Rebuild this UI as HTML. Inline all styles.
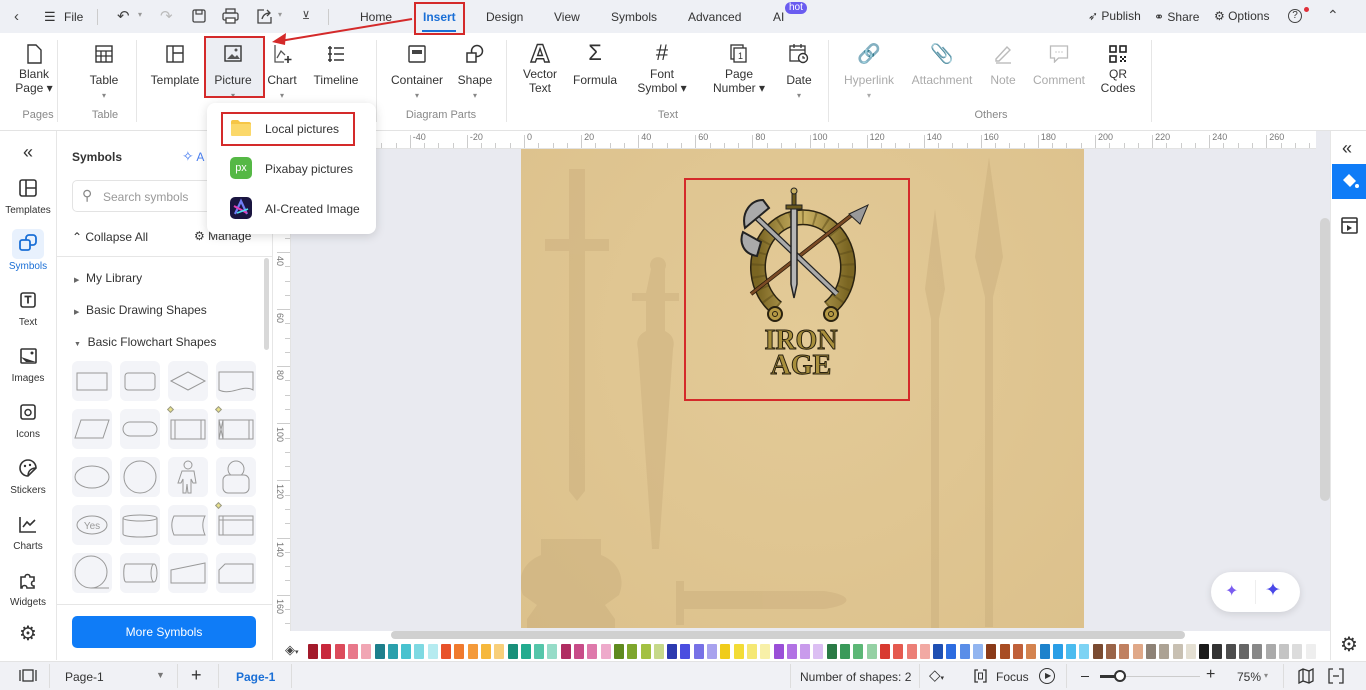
<!DOCTYPE html>
<html><head><meta charset="utf-8">
<style>
*{box-sizing:border-box;margin:0;padding:0}
body{width:1366px;height:690px;overflow:hidden;position:relative;font-family:"Liberation Sans",sans-serif;font-size:12px;color:#333;background:#fff}
.a{position:absolute}
.t{position:absolute;white-space:nowrap}
.lbl{position:absolute;text-align:center;font-size:12px;color:#333;line-height:14px;transform:translateX(-50%)}
.dis{color:#aaa}
.grp{position:absolute;top:109px;font-size:11px;color:#888;transform:translateX(-50%)}
.sep{position:absolute;top:40px;width:1px;height:82px;background:#e6e6e6}
.ic{position:absolute;transform:translateX(-50%)}
.rail{position:absolute;left:0;width:56px;text-align:center;font-size:10px;color:#333}
.tile{position:absolute;width:40px;height:40px;background:#f3f4f8;border-radius:6px}
</style></head><body>
<!-- top bar -->
<div class="a" style="left:0;top:0;width:1366px;height:33px;background:#eef0f5"></div>
<div class="t" style="left:14px;top:8px;font-size:15px;color:#444">&#8249;</div>
<div class="t" style="left:44px;top:9px;font-size:13px">&#9776;</div>
<div class="t" style="left:64px;top:10px;font-size:12px">File</div>
<div class="a" style="left:97px;top:9px;width:1px;height:16px;background:#ccc"></div>
<div class="t" style="left:117px;top:7px;font-size:15px;color:#444">&#8630;</div>
<div class="t" style="left:138px;top:10px;font-size:8px;color:#999">&#9662;</div>
<div class="t" style="left:160px;top:7px;font-size:15px;color:#bbb">&#8631;</div>
<svg class="a" style="left:192px;top:9px" width="14" height="14"><rect x="1" y="1" width="12" height="12" rx="1.5" fill="none" stroke="#444" stroke-width="1.3"/><rect x="4" y="1" width="6" height="4" fill="none" stroke="#444" stroke-width="1.2"/></svg>
<svg class="a" style="left:222px;top:8px" width="17" height="16"><rect x="4" y="1" width="9" height="4" fill="none" stroke="#444" stroke-width="1.3"/><rect x="1" y="5" width="15" height="7" rx="1.5" fill="none" stroke="#444" stroke-width="1.3"/><rect x="4" y="10" width="9" height="5" fill="#fff" stroke="#444" stroke-width="1.3"/></svg>
<svg class="a" style="left:256px;top:8px" width="16" height="16"><path d="M8 2H2v13h13V9" fill="none" stroke="#444" stroke-width="1.3"/><path d="M6 11c1-4 4-6 8-6M11 2l3 3-3 3" fill="none" stroke="#444" stroke-width="1.3"/></svg>
<div class="t" style="left:278px;top:10px;font-size:8px;color:#999">&#9662;</div>
<div class="t" style="left:302px;top:9px;font-size:11px;color:#444">&#8891;</div>
<div class="a" style="left:328px;top:9px;width:1px;height:16px;background:#ccc"></div>
<div class="t" style="left:360px;top:10px;font-size:12px">Home</div>
<div class="t" style="left:423px;top:10px;font-size:12px;color:#1a6fd6;font-weight:bold">Insert</div>
<div class="a" style="left:422px;top:30px;width:34px;height:2px;background:#1a6fd6"></div>
<div class="t" style="left:486px;top:10px;font-size:12px">Design</div>
<div class="t" style="left:554px;top:10px;font-size:12px">View</div>
<div class="t" style="left:611px;top:10px;font-size:12px">Symbols</div>
<div class="t" style="left:688px;top:10px;font-size:12px">Advanced</div>
<div class="t" style="left:773px;top:10px;font-size:12px">AI</div>
<div class="t" style="left:785px;top:2px;font-size:10px;color:#fff;background:#6a5cf0;border-radius:7px;padding:0 4px;line-height:12px">hot</div>
<div class="t" style="left:1088px;top:9px;font-size:12px">&#10166; Publish</div>
<div class="t" style="left:1154px;top:10px;font-size:12px">&#9901; Share</div>
<div class="t" style="left:1214px;top:9px;font-size:12px">&#9881; Options</div>
<div class="a" style="left:1288px;top:9px;width:14px;height:14px;border:1.3px solid #444;border-radius:50%;font-size:10px;text-align:center;line-height:12px">?</div>
<div class="a" style="left:1304px;top:7px;width:5px;height:5px;border-radius:50%;background:#e0303a"></div>
<div class="t" style="left:1327px;top:7px;font-size:14px;color:#444">&#8963;</div>

<!-- ribbon -->
<div class="a" style="left:0;top:130px;width:1366px;height:1px;background:#e3e3e3"></div>
<div class="a" style="left:206px;top:37px;width:57px;height:59px;background:#eceef3"></div>
<svg class="ic" style="left:34px;top:44px" width="16" height="20"><path d="M2 1h8l5 5v13H2z" fill="none" stroke="#333" stroke-width="1.4"/></svg>
<div class="lbl" style="left:34px;top:67px">Blank<br>Page &#9662;</div>
<svg class="ic" style="left:104px;top:45px" width="18" height="18"><rect x="1" y="1" width="16" height="16" fill="none" stroke="#333" stroke-width="1.4"/><path d="M1 6h16M1 11h16M6 6v11M11 6v11" stroke="#333" stroke-width="1.3"/></svg>
<div class="lbl" style="left:104px;top:73px">Table<br><span style="font-size:8px;color:#888">&#9662;</span></div>
<svg class="ic" style="left:175px;top:45px" width="18" height="18"><rect x="1" y="1" width="16" height="16" fill="none" stroke="#333" stroke-width="1.4"/><path d="M7 1v16M7 8h10" stroke="#333" stroke-width="1.4"/></svg>
<div class="lbl" style="left:175px;top:73px">Template</div>
<svg class="ic" style="left:233px;top:45px" width="18" height="17"><rect x="1" y="1" width="16" height="15" fill="none" stroke="#333" stroke-width="1.4"/><path d="M3 14l5-5 3 3 2-2 3 4z" fill="#555"/><circle cx="12" cy="5" r="1.5" fill="#555"/></svg>
<div class="lbl" style="left:233px;top:73px">Picture<br><span style="font-size:8px;color:#888">&#9662;</span></div>
<svg class="ic" style="left:283px;top:44px" width="20" height="20"><path d="M2 1v17h9" fill="none" stroke="#555" stroke-width="1.3"/><path d="M4 14l4-7 4 4" fill="none" stroke="#555" stroke-width="1.3"/><path d="M15 12v7M11.5 15.5h7" stroke="#333" stroke-width="1.6"/></svg>
<div class="lbl" style="left:282px;top:73px">Chart<br><span style="font-size:8px;color:#888">&#9662;</span></div>
<svg class="ic" style="left:336px;top:45px" width="18" height="18"><path d="M3 1v16M7 3h10M7 9h10M7 15h10M5 3H1M5 9H1M5 15H1" stroke="#333" stroke-width="1.5"/></svg>
<div class="lbl" style="left:336px;top:73px">Timeline</div>
<svg class="ic" style="left:417px;top:45px" width="18" height="18"><rect x="1" y="1" width="16" height="16" rx="1" fill="none" stroke="#333" stroke-width="1.4"/><rect x="4" y="5" width="10" height="4" fill="#444"/></svg>
<div class="lbl" style="left:417px;top:73px">Container<br><span style="font-size:8px;color:#888">&#9662;</span></div>
<svg class="ic" style="left:475px;top:44px" width="20" height="20"><circle cx="12" cy="7" r="5.5" fill="none" stroke="#333" stroke-width="1.5"/><rect x="2" y="9" width="9" height="9" fill="#fff" stroke="#333" stroke-width="1.5"/></svg>
<div class="lbl" style="left:475px;top:73px">Shape<br><span style="font-size:8px;color:#888">&#9662;</span></div>
<div class="ic" style="left:540px;top:40px;font-size:24px;font-family:'DejaVu Sans';color:#fff;-webkit-text-stroke:1.4px #333;font-weight:bold">A</div>
<div class="lbl" style="left:540px;top:67px">Vector<br>Text</div>
<div class="ic" style="left:595px;top:40px;font-size:22px;color:#333">&#931;</div>
<div class="lbl" style="left:595px;top:73px">Formula</div>
<div class="ic" style="left:662px;top:40px;font-size:22px;color:#333">#</div>
<div class="lbl" style="left:662px;top:67px">Font<br>Symbol &#9662;</div>
<svg class="ic" style="left:739px;top:44px" width="18" height="19"><rect x="1" y="1" width="12" height="14" fill="none" stroke="#333" stroke-width="1.3"/><rect x="4" y="4" width="12" height="14" fill="#fff" stroke="#333" stroke-width="1.3"/><text x="8" y="15" font-size="9" font-family="Liberation Sans" fill="#333">1</text></svg>
<div class="lbl" style="left:739px;top:67px">Page<br>Number &#9662;</div>
<svg class="ic" style="left:799px;top:43px" width="20" height="21"><rect x="1" y="3" width="15" height="15" fill="none" stroke="#333" stroke-width="1.3"/><path d="M1 7h15M5 1v4M12 1v4" stroke="#333" stroke-width="1.3"/><circle cx="14" cy="15" r="4.5" fill="#fff" stroke="#333" stroke-width="1.4"/><path d="M14 13v2h2" stroke="#333" stroke-width="1.2" fill="none"/></svg>
<div class="lbl" style="left:799px;top:73px">Date<br><span style="font-size:8px;color:#888">&#9662;</span></div>
<div class="ic" style="left:869px;top:42px;font-size:19px;color:#bbb">&#128279;</div>
<div class="lbl dis" style="left:869px;top:73px">Hyperlink<br><span style="font-size:8px">&#9662;</span></div>
<div class="ic" style="left:942px;top:42px;font-size:19px;color:#bbb">&#128206;</div>
<div class="lbl dis" style="left:942px;top:73px">Attachment</div>
<svg class="ic" style="left:1003px;top:44px" width="20" height="20"><path d="M3 15L14 3l3 3L6 17H3z" fill="none" stroke="#bbb" stroke-width="1.4"/><path d="M3 19h15" stroke="#bbb" stroke-width="1.4"/></svg>
<div class="lbl dis" style="left:1003px;top:73px">Note</div>
<svg class="ic" style="left:1059px;top:45px" width="19" height="18"><path d="M1 1h17v12H9l-4 4v-4H1z" fill="none" stroke="#bbb" stroke-width="1.3"/><path d="M6 7h1M9 7h1M12 7h1" stroke="#bbb" stroke-width="1.5"/></svg>
<div class="lbl dis" style="left:1059px;top:73px">Comment</div>
<svg class="ic" style="left:1118px;top:45px" width="18" height="18"><rect x="1" y="1" width="6" height="6" fill="none" stroke="#222" stroke-width="1.6"/><rect x="11" y="1" width="6" height="6" fill="none" stroke="#222" stroke-width="1.6"/><rect x="1" y="11" width="6" height="6" fill="none" stroke="#222" stroke-width="1.6"/><path d="M11 11h2v2h-2zM15 11h2v2h-2zM13 13h2v2h-2zM11 15h2v2h-2zM15 15h2v2h-2z" fill="#222"/></svg>
<div class="lbl" style="left:1118px;top:67px">QR<br>Codes</div>
<div class="grp" style="left:38px">Pages</div>
<div class="grp" style="left:105px">Table</div>
<div class="grp" style="left:441px">Diagram Parts</div>
<div class="grp" style="left:668px">Text</div>
<div class="grp" style="left:991px">Others</div>
<div class="sep" style="left:57px"></div><div class="sep" style="left:136px"></div><div class="sep" style="left:376px"></div><div class="sep" style="left:506px"></div><div class="sep" style="left:828px"></div><div class="sep" style="left:1151px"></div>

<!-- left rail -->
<div class="a" style="left:56px;top:131px;width:1px;height:529px;background:#e6e6e6"></div>
<div class="rail" style="top:142px;font-size:18px;color:#333">&#171;</div>
<svg class="a" style="left:19px;top:179px" width="18" height="18"><rect x="1" y="1" width="16" height="16" rx="2" fill="none" stroke="#333" stroke-width="1.6"/><path d="M7 1v16M7 9h10" stroke="#333" stroke-width="1.6"/></svg>
<div class="rail" style="top:205px">Templates</div>
<div class="a" style="left:12px;top:229px;width:32px;height:30px;background:#e8f1fd;border-radius:5px"></div>
<svg class="a" style="left:19px;top:234px" width="18" height="18"><rect x="7" y="1" width="10" height="10" rx="3" fill="none" stroke="#1a6fd6" stroke-width="1.8"/><rect x="1" y="6" width="10" height="10" rx="2" fill="#e8f1fd" stroke="#1a6fd6" stroke-width="1.8"/></svg>
<div class="rail" style="top:261px;color:#1a6fd6">Symbols</div>
<svg class="a" style="left:20px;top:292px" width="16" height="16"><rect x="1" y="1" width="14" height="14" rx="2" fill="none" stroke="#333" stroke-width="1.6"/><path d="M4.5 4.5h7M8 4.5v7" stroke="#333" stroke-width="1.8"/></svg>
<div class="rail" style="top:317px">Text</div>
<svg class="a" style="left:20px;top:348px" width="17" height="16"><rect x="1" y="1" width="15" height="14" rx="1" fill="none" stroke="#333" stroke-width="1.6"/><path d="M1 9l5 5h10z" fill="#333"/><circle cx="12" cy="5" r="1.5" fill="#333"/></svg>
<div class="rail" style="top:373px">Images</div>
<svg class="a" style="left:20px;top:404px" width="16" height="16"><rect x="1" y="1" width="14" height="14" rx="2" fill="none" stroke="#333" stroke-width="1.6"/><circle cx="8" cy="8.5" r="3" fill="none" stroke="#333" stroke-width="1.5"/></svg>
<div class="rail" style="top:429px">Icons</div>
<svg class="a" style="left:19px;top:459px" width="18" height="18"><path d="M17 9a8 8 0 1 0-8 8l8-8z" fill="none" stroke="#333" stroke-width="1.6"/><circle cx="6" cy="7" r="1.2" fill="#333"/><circle cx="11" cy="6" r="1.2" fill="#333"/><path d="M9 17c0-5 3-8 8-8" fill="none" stroke="#333" stroke-width="1.5"/></svg>
<div class="rail" style="top:485px">Stickers</div>
<svg class="a" style="left:19px;top:516px" width="18" height="17"><path d="M1 1v15h16" fill="none" stroke="#333" stroke-width="1.6"/><path d="M4 11l4-5 3 3 5-5" fill="none" stroke="#333" stroke-width="1.6"/></svg>
<div class="rail" style="top:541px">Charts</div>
<svg class="a" style="left:19px;top:571px" width="18" height="18"><path d="M2 6h4a2.5 2.5 0 1 1 5 0h4v4a2.5 2.5 0 1 0 0 5v2H8a2.5 2.5 0 1 0-5 0H2z" fill="none" stroke="#333" stroke-width="1.6"/></svg>
<div class="rail" style="top:597px">Widgets</div>
<div class="rail" style="top:621px;font-size:20px;color:#333">&#9881;</div>

<!-- symbols panel -->
<div class="a" style="left:272px;top:131px;width:1px;height:529px;background:#e6e6e6"></div>
<div class="t" style="left:72px;top:150px;font-size:12px;font-weight:bold">Symbols</div>
<div class="t" style="left:182px;top:148px;font-size:14px;color:#4a7ff0">&#10023;<span style="font-size:12px"> A</span></div>
<div class="a" style="left:72px;top:180px;width:210px;height:32px;border:1px solid #e3e3e3;border-radius:5px"></div>
<div class="t" style="left:82px;top:187px;font-size:14px;color:#888">&#9906;</div>
<div class="t" style="left:103px;top:190px;font-size:12px;color:#999">Search symbols</div>
<div class="t" style="left:72px;top:230px;font-size:12px">&#8963; Collapse All</div>
<div class="t" style="left:194px;top:229px;font-size:12px">&#9881; Manage</div>
<div class="a" style="left:56px;top:256px;width:216px;height:1px;background:#e6e6e6"></div>
<div class="t" style="left:74px;top:271px;font-size:12px"><span style="font-size:7px;color:#666">&#9654;</span>&nbsp; My Library</div>
<div class="t" style="left:74px;top:303px;font-size:12px"><span style="font-size:7px;color:#666">&#9654;</span>&nbsp; Basic Drawing Shapes</div>
<div class="t" style="left:74px;top:335px;font-size:12px"><span style="font-size:7px;color:#666">&#9660;</span>&nbsp; Basic Flowchart Shapes</div>
<div class="a" style="left:264px;top:258px;width:5px;height:92px;background:#d8d8d8;border-radius:3px"></div>
<div id="tiles"></div>
<div class="a" style="left:56px;top:604px;width:216px;height:1px;background:#e6e6e6"></div>
<div class="a" style="left:72px;top:616px;width:184px;height:32px;background:#0f7cf7;border-radius:5px;color:#fff;text-align:center;line-height:32px;font-size:12px">More Symbols</div>

<!-- canvas -->
<div class="a" style="left:273px;top:131px;width:1057px;height:500px;background:#e9eaf0"></div>
<div id="hr" class="a" style="left:273px;top:131px;width:1043px;height:18px;background:#fff;overflow:hidden;border-bottom:1px solid #e3e3e3"></div>
<div id="vr" class="a" style="left:273px;top:131px;width:18px;height:500px;background:#fff;overflow:hidden;border-right:1px solid #e3e3e3"></div>
<div class="a" style="left:1320px;top:218px;width:10px;height:283px;background:#d3d3d3;border-radius:5px"></div>
<div class="a" style="left:1330px;top:131px;width:1px;height:529px;background:#e6e6e6"></div>
<div class="a" style="left:521px;top:149px;width:563px;height:479px;background:radial-gradient(ellipse at 50% 40%,#e3ca97,#dcc18c)"></div>
<svg class="a" style="left:521px;top:149px" width="563" height="479">
<g fill="#c9ad7c" opacity=".45">
<path d="M48 20h16v70h24v12h-24v240l-8 10-8-10V102H24V90h24z"/>
<path d="M130 120a8 8 0 1 1 14 0v24h14v8h-14v30c8 4 10 10 8 18l-14 200-7 0-14-200c-2-8 0-14 8-18v-30h-14v-8h14z"/>
<path d="M414 60l10 80-6 30v310h-8V170l-6-30z"/>
<path d="M468 8l14 100-10 40v330h-8V148l-10-40z"/>
<path d="M20 390h60v16c20 8 24 26 18 40l-14 10 10 14v10H6v-10l10-14-14-10c-6-14-2-32 18-40z"/>
<path d="M155 432h8v10h140c30 4 30 14 0 18H163v16h-8z"/>
</g></svg>
<div class="a" style="left:684px;top:178px;width:226px;height:223px;border:2px solid #d42a2a"></div>
<svg class="a" style="left:733px;top:186px" width="140" height="192">
<defs><linearGradient id="g" x1="0" x2="1"><stop offset="0" stop-color="#7a6522"/><stop offset=".5" stop-color="#cdb466"/><stop offset="1" stop-color="#7a6522"/></linearGradient></defs>
<path d="M44 122A45 50 0 1 1 96 122" fill="none" stroke="#2a2210" stroke-width="16"/>
<path d="M44 122A45 50 0 1 1 96 122" fill="none" stroke="url(#g)" stroke-width="13"/>
<path d="M44 122A45 50 0 1 1 96 122" fill="none" stroke="#5a4a18" stroke-width="13" stroke-dasharray="2 10" opacity=".5"/>
<circle cx="42" cy="128" r="7" fill="#b69a45" stroke="#2a2210" stroke-width="2"/><circle cx="42" cy="128" r="2.5" fill="none" stroke="#2a2210"/>
<circle cx="98" cy="128" r="7" fill="#b69a45" stroke="#2a2210" stroke-width="2"/><circle cx="98" cy="128" r="2.5" fill="none" stroke="#2a2210"/>
<line x1="18" y1="108" x2="120" y2="28" stroke="#2a1a0a" stroke-width="4"/><line x1="18" y1="108" x2="120" y2="28" stroke="#7a4a25" stroke-width="2.5"/>
<path d="M116 28l19-9-8 19z" fill="#999" stroke="#222"/>
<line x1="22" y1="30" x2="104" y2="108" stroke="#222" stroke-width="6"/><line x1="22" y1="30" x2="104" y2="108" stroke="#aaa" stroke-width="3.5"/>
<path d="M30 14c-12 0-22 12-18 28l24-20zM10 46c-4 10 0 22 14 24l4-14z" fill="#aaa" stroke="#222" stroke-width="2"/>
<path d="M58 22l6 0 0 76-3 14-3-14z" fill="#b5b5b5" stroke="#222" stroke-width="1.5"/>
<rect x="53" y="19" width="16" height="4" fill="#6c5a1c" stroke="#222"/><rect x="59" y="6" width="4" height="13" fill="#6c5a1c" stroke="#222"/><circle cx="61" cy="5" r="3" fill="#c8b061" stroke="#222"/>
<text x="68" y="163" text-anchor="middle" font-family="Liberation Serif" font-weight="bold" font-size="28" fill="#a88f3c" stroke="#2a2210" stroke-width="1">IRON</text>
<text x="68" y="188" text-anchor="middle" font-family="Liberation Serif" font-weight="bold" font-size="28" fill="#a88f3c" stroke="#2a2210" stroke-width="1">AGE</text>
</svg>
<!-- floating AI buttons -->
<div class="a" style="left:1211px;top:572px;width:89px;height:40px;background:#fff;border-radius:20px;box-shadow:0 2px 8px rgba(0,0,0,.12)"></div>
<div class="t" style="left:1225px;top:581px;font-size:16px;color:#7a5cf0">&#10022;</div>
<div class="a" style="left:1255px;top:580px;width:1px;height:24px;background:#eee"></div>
<div class="t" style="left:1265px;top:579px;font-size:19px;color:#4a48e8">&#10022;</div>
<!-- right panel -->
<div class="t" style="left:1342px;top:138px;font-size:18px;color:#333">&#171;</div>
<div class="a" style="left:1332px;top:164px;width:34px;height:35px;background:#0f7cf7"></div>
<svg class="a" style="left:1340px;top:172px" width="20" height="18"><path d="M3 8l6-6 7 7-6 6z" fill="#fff"/><circle cx="17" cy="14" r="2" fill="#fff"/></svg>
<svg class="a" style="left:1341px;top:217px" width="17" height="17"><rect x="1" y="1" width="15" height="15" rx="1" fill="none" stroke="#333" stroke-width="1.6"/><path d="M1 5h15" stroke="#333" stroke-width="1.6"/><path d="M6 8l5 3-5 3z" fill="#333"/></svg>
<div class="a" style="left:391px;top:631px;width:794px;height:8px;background:#d0d0d0;border-radius:4px"></div>
<div class="t" style="left:1340px;top:632px;font-size:20px;color:#333">&#9881;</div>

<!-- palette -->
<div class="t" style="left:285px;top:642px;font-size:13px;color:#444">&#9672;<span style="font-size:7px">&#9662;</span></div>
<div id="pal"></div>
<!-- status bar -->
<div class="a" style="left:0;top:661px;width:1366px;height:29px;background:#f0f1f5;border-top:1px solid #e3e3e3"></div>
<svg class="a" style="left:19px;top:669px" width="18" height="13"><rect x="4" y="1" width="10" height="11" fill="none" stroke="#333" stroke-width="1.3"/><path d="M1 1v11M17 1v11" stroke="#333" stroke-width="1.3"/></svg>
<div class="a" style="left:49px;top:664px;width:1px;height:24px;background:#ddd"></div>
<div class="t" style="left:65px;top:670px;font-size:12px">Page-1</div>
<div class="t" style="left:156px;top:670px;font-size:9px;color:#777">&#9660;</div>
<div class="a" style="left:177px;top:664px;width:1px;height:24px;background:#ddd"></div>
<div class="t" style="left:191px;top:665px;font-size:18px;color:#333">+</div>
<div class="a" style="left:218px;top:664px;width:1px;height:24px;background:#ddd"></div>
<div class="t" style="left:236px;top:670px;font-size:12px;color:#1a6fd6;font-weight:bold">Page-1</div>
<div class="a" style="left:291px;top:664px;width:1px;height:24px;background:#ddd"></div>
<div class="a" style="left:790px;top:664px;width:1px;height:24px;background:#ddd"></div>
<div class="t" style="left:800px;top:670px;font-size:12px">Number of shapes: 2</div>
<div class="a" style="left:919px;top:664px;width:1px;height:24px;background:#ddd"></div>
<div class="t" style="left:929px;top:666px;font-size:15px;color:#333">&#9671;<span style="font-size:7px">&#9662;</span></div>
<svg class="a" style="left:974px;top:669px" width="13" height="14"><path d="M4 1H1v12h3M9 1h3v12H9" fill="none" stroke="#333" stroke-width="1.3"/><rect x="4.5" y="4" width="4" height="6" fill="none" stroke="#333"/></svg>
<div class="t" style="left:996px;top:670px;font-size:12px">Focus</div>
<div class="a" style="left:1039px;top:668px;width:16px;height:16px;border:1.3px solid #333;border-radius:50%"></div>
<div class="t" style="left:1045px;top:671px;font-size:8px">&#9654;</div>
<div class="a" style="left:1066px;top:664px;width:1px;height:24px;background:#ddd"></div>
<div class="a" style="left:1081px;top:676px;width:8px;height:1.3px;background:#333"></div>
<div class="a" style="left:1100px;top:675px;width:20px;height:3px;background:#333"></div>
<div class="a" style="left:1120px;top:676px;width:80px;height:1px;background:#ccc"></div>
<div class="a" style="left:1114px;top:670px;width:12px;height:12px;border:2px solid #333;border-radius:50%;background:#fff"></div>
<div class="t" style="left:1206px;top:666px;font-size:16px;color:#333">+</div>
<div class="t" style="left:1237px;top:670px;font-size:12px">75%</div>
<div class="t" style="left:1264px;top:671px;font-size:8px;color:#888">&#9662;</div>
<div class="a" style="left:1283px;top:664px;width:1px;height:24px;background:#ddd"></div>
<svg class="a" style="left:1298px;top:668px" width="16" height="16"><path d="M1 3l4-2 6 2 4-2v12l-4 2-6-2-4 2z M5 1v12M11 3v12" fill="none" stroke="#333" stroke-width="1.3"/></svg>
<svg class="a" style="left:1328px;top:668px" width="16" height="16"><path d="M5 1H1v14h4M11 1h4v14h-4" fill="none" stroke="#333" stroke-width="1.3"/><path d="M5 8h6" stroke="#333" stroke-width="1.3"/></svg>

<!-- dropdown -->
<div class="a" style="left:207px;top:103px;width:169px;height:131px;background:#fff;border-radius:8px;box-shadow:0 2px 10px rgba(0,0,0,.15)"></div>
<svg class="a" style="left:230px;top:119px" width="22" height="18"><path d="M1 3a2 2 0 0 1 2-2h5l2 2h9a2 2 0 0 1 2 2v11H1z" fill="#f6c647"/><rect x="1" y="5" width="20" height="12" rx="1" fill="#fbd86a"/></svg>
<div class="t" style="left:265px;top:122px;font-size:12px">Local pictures</div>
<div class="a" style="left:230px;top:157px;width:22px;height:22px;border-radius:5px;background:#55b845;color:#fff;font-size:11px;text-align:center;line-height:22px">px</div>
<div class="t" style="left:265px;top:162px;font-size:12px">Pixabay pictures</div>
<svg class="a" style="left:230px;top:197px" width="22" height="22"><rect width="22" height="22" rx="5" fill="#1a1540"/><path d="M5 17L11 4l6 13" fill="none" stroke="#6f7cf5" stroke-width="2.2"/><path d="M4 9l13 7" stroke="#e23fb5" stroke-width="2"/><path d="M7 16l11-4" stroke="#4de0f0" stroke-width="1.6"/></svg>
<div class="t" style="left:265px;top:202px;font-size:12px">AI-Created Image</div>

<!-- red annotations -->
<div class="a" style="left:414px;top:2px;width:51px;height:33px;border:2px solid #d42a2a"></div>
<div class="a" style="left:204px;top:36px;width:61px;height:62px;border:2px solid #d42a2a"></div>
<div class="a" style="left:221px;top:112px;width:134px;height:34px;border:2px solid #d42a2a"></div>
<svg class="a" style="left:260px;top:10px" width="160" height="40"><path d="M152 9L20 31" stroke="#d42a2a" stroke-width="2"/><path d="M12 32l14-9-1 12z" fill="#d42a2a"/></svg>

<script>
var T=document.getElementById('tiles'),h='';
var xs=[72,120,168,216],ys=[361,409,457,505,553];
var sh=[
['<rect x="5" y="12" width="30" height="17" fill="none" stroke="#999"/>','<rect x="5" y="12" width="30" height="17" rx="3" fill="none" stroke="#999"/>','<path d="M3 20l17-9 17 9-17 9z" fill="none" stroke="#999"/>','<path d="M3 11h34v18c-10-6-22 6-34 0z" fill="none" stroke="#999"/>'],
['<path d="M9 11h28l-6 18H3z" fill="none" stroke="#999"/>','<rect x="3" y="13" width="34" height="14" rx="7" fill="none" stroke="#999"/>','<rect x="3" y="11" width="34" height="19" fill="none" stroke="#999"/><path d="M7 11v19M33 11v19" stroke="#999"/>','<rect x="3" y="11" width="34" height="19" fill="none" stroke="#999"/><path d="M7 11v19M33 11v19M3 11l4 19M7 11l-4 19" stroke="#999"/>'],
['<ellipse cx="20" cy="20" rx="17" ry="11" fill="none" stroke="#999"/>','<circle cx="20" cy="20" r="16" fill="none" stroke="#999"/>','<circle cx="20" cy="8" r="4" fill="none" stroke="#999"/><path d="M14 14h12l2 12h-3l-2-4v14h-3l-1-9-1 9h-3V22l-2 4h-3z" fill="none" stroke="#999"/>','<circle cx="20" cy="12" r="8" fill="none" stroke="#999"/><rect x="7" y="18" width="26" height="18" rx="5" fill="#f3f4f8" stroke="#999"/>'],
['<ellipse cx="20" cy="20" rx="15" ry="9" fill="none" stroke="#999"/><text x="20" y="24" text-anchor="middle" font-size="10" fill="#999" font-family="Liberation Sans">Yes</text>','<path d="M3 13v16c0 4 34 4 34 0V13" fill="none" stroke="#999"/><ellipse cx="20" cy="13" rx="17" ry="3" fill="none" stroke="#999"/>','<path d="M6 11h31c-3 6-3 12 0 19H6c-3-7-3-13 0-19z" fill="none" stroke="#999"/>','<rect x="3" y="11" width="34" height="19" fill="none" stroke="#999"/><path d="M7 11v19M3 15h34" stroke="#999"/>'],
['<circle cx="19" cy="19" r="16" fill="none" stroke="#999"/><path d="M19 35h18" stroke="#999"/>','<path d="M6 11h28M6 29h28M6 11c-3 0-3 18 0 18" fill="none" stroke="#999"/><ellipse cx="34" cy="20" rx="3" ry="9" fill="none" stroke="#999"/>','<path d="M3 17l34-7v20H3z" fill="none" stroke="#999"/>','<path d="M9 11h28v19H3V17z" fill="none" stroke="#999"/>']];
for(var r=0;r<5;r++)for(var c=0;c<4;c++){h+='<div class="tile" style="left:'+xs[c]+'px;top:'+ys[r]+'px"></div><svg class="a" style="left:'+xs[c]+'px;top:'+ys[r]+'px" width="40" height="40">'+sh[r][c]+'</svg>';}
h+='<div class="a" style="left:168px;top:407px;width:5px;height:5px;background:#e8e08a;border:1px solid #998;transform:rotate(45deg)"></div><div class="a" style="left:216px;top:407px;width:5px;height:5px;background:#e8e08a;border:1px solid #998;transform:rotate(45deg)"></div><div class="a" style="left:216px;top:503px;width:5px;height:5px;background:#e8e08a;border:1px solid #998;transform:rotate(45deg)"></div>';
T.innerHTML=h;
var cols="#a31a2b,#c8283c,#dc4b5b,#e8788a,#f1a6b4,#1d7f8c,#2aa0ac,#48c2cf,#7fd9e2,#b5ebf0,#e8522a,#f07a2e,#f49a3a,#f6b83c,#f8cf7a,#19907a,#22ab8f,#55c6aa,#96dcc8,#b02d62,#c84c88,#de79ab,#eeaacb,#5f8a1e,#7ea62c,#a3c142,#c6d98a,#2c3ab0,#4a4ee0,#7771e6,#a8a2ee,#f0cc1a,#f3dc36,#f5e874,#f8f0a8,#9a4fd8,#b272e4,#c99bec,#dcbff3,#2a7a45,#3a9a5a,#5cb776,#95d1a4,#d83a30,#e55a4f,#ec7f77,#f2a9a3,#1e4fb3,#2c6ce0,#5a8ee8,#92b5f0,#8a3a18,#a84c22,#c0603a,#d4834f,#1d82cc,#2a9ee6,#4bbcef,#7dd3f4,#7a4a30,#9a6448,#c08060,#e0a888,#8e8276,#aca294,#c8c0b2,#e4dfd2,#1a1a1a,#333,#4d4d4d,#666,#888,#aaa,#c4c4c4,#dcdcdc,#eeeeee".split(',');
var p='',x=308;
for(var i=0;i<cols.length;i++){p+='<div class="a" style="left:'+x+'px;top:644px;width:10px;height:15px;border-radius:1px;background:'+cols[i]+'"></div>';x+=13.3;}
document.getElementById('pal').innerHTML=p;
var hr='';
for(var k=-60;k<=280;k+=5){var px=524+(k)*2.855-273;var big=k%20==0;hr+='<div class="a" style="left:'+px+'px;top:'+(big?4:12)+'px;width:1px;height:'+(big?14:6)+'px;background:#ccc"></div>';if(big&&k>=-40)hr+='<div class="t" style="left:'+(px+3)+'px;top:1px;font-size:9px;color:#777">'+k+'</div>';}
document.getElementById('hr').innerHTML=hr;
var vr='';
for(var k=-20;k<=180;k+=5){var py=252+(k-40)*2.855-131;var big=k%20==0;vr+='<div class="a" style="top:'+py+'px;left:'+(big?4:12)+'px;height:1px;width:'+(big?14:6)+'px;background:#ccc"></div>';if(big&&k>=40)vr+='<div class="t" style="top:'+(py+4)+'px;font-size:9px;color:#777;transform:rotate(90deg);transform-origin:left top;left:12px">'+k+'</div>';}
document.getElementById('vr').innerHTML=vr;
</script>
</body></html>
